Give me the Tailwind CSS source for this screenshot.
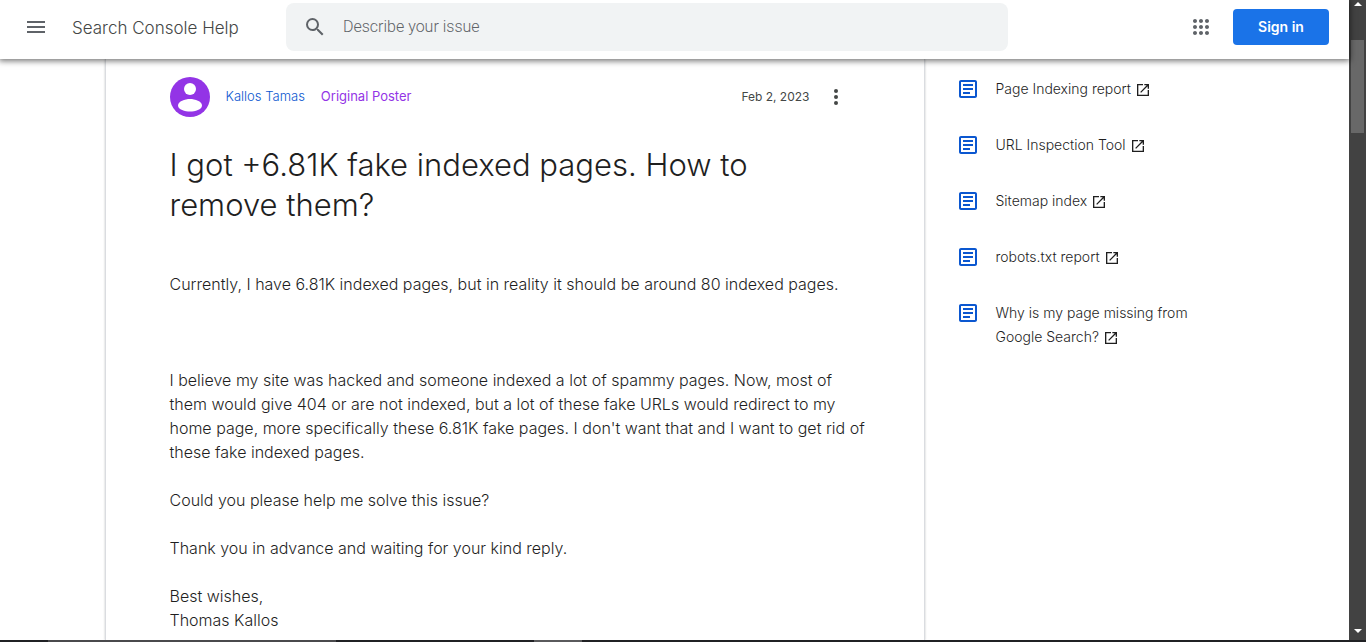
<!DOCTYPE html>
<html lang="en">
<head>
  <meta charset="UTF-8" />
  <meta name="viewport" content="width=device-width,initial-scale=1" />
  <title>I got +6.81K fake indexed pages. How to remove them? - Search Console Help</title>
  <script src="https://cdn.jsdelivr.net/npm/@tailwindcss/browser@4"></script>
</head>
<body class="h-screen flex flex-col overflow-hidden bg-white font-[Inter,sans-serif] text-[#1f1f1f]">

  <!-- icons shared by the resource links -->
  <svg class="hidden">
    <symbol id="article" viewBox="0 0 24 24">
      <path d="M19 5v14H5V5h14m0-2H5c-1.1 0-2 .9-2 2v14c0 1.1.9 2 2 2h14c1.1 0 2-.9 2-2V5c0-1.1-.9-2-2-2zM14 17H7v-2h7v2zm3-4H7v-2h10v2zm0-4H7V7h10v2z"/>
    </symbol>
    <symbol id="open-in-new" viewBox="0 0 24 24">
      <path d="M19 19H5V5h7V3H3v18h18v-9h-2v7zM14 3v2h3.590l-9.830 9.830 1.410 1.410L19 6.410V10h2V3h-7z"/>
    </symbol>
  </svg>

  <div class="flex-1 min-h-0 flex">
    <div class="flex-1 min-w-0 flex flex-col">

      <!-- Top bar -->
      <header class="relative z-10 h-[59px] shrink-0 flex items-start bg-white pl-6 pr-5 shadow-[0_1px_6px_1px_rgba(0,0,0,0.55)]">
        <button aria-label="Main menu" class="mt-[15px] size-6 text-[#5f6368]">
          <svg viewBox="0 0 24 24" class="size-6" fill="currentColor"><path d="M3 18h18v-2H3v2zm0-5h18v-2H3v2zm0-7v2h18V6H3z"/></svg>
        </button>
        <a href="#" class="mt-4 ml-6 w-[214px] text-[17px] leading-6 font-light text-[#444746]">Search Console Help</a>
        <label class="mt-[3px] flex-1 max-w-[722px] h-12 flex items-center gap-4 rounded-lg bg-[#f1f3f4] pl-[17px] pr-4">
          <svg viewBox="0 0 24 24" class="size-6 text-[#5f6368]" fill="currentColor"><path d="M15.500 14h-.790l-.280-.270A6.471 6.471 0 0 0 16 9.500 6.500 6.500 0 1 0 9.500 16c1.610 0 3.090-.590 4.230-1.570l.270.280v.790l5 4.990L20.490 19l-4.990-5zm-6 0C7.010 14 5 11.990 5 9.500S7.010 5 9.500 5 14 7.010 14 9.500 11.990 14 9.500 14z"/></svg>
          <input type="text" aria-label="Search help" placeholder="Describe your issue" class="flex-1 min-w-0 bg-transparent outline-none font-[Roboto,sans-serif] font-light text-base placeholder:text-[#5f6368]" />
        </label>
        <button aria-label="Google apps" class="mt-[15px] ml-auto size-6 text-[#5f6368]">
          <svg viewBox="0 0 24 24" class="size-6" fill="currentColor"><path d="M6 8c1.100 0 2-.900 2-2s-.900-2-2-2-2 .900-2 2 .900 2 2 2zm6 12c1.100 0 2-.900 2-2s-.900-2-2-2-2 .900-2 2 .900 2 2 2zm-6 0c1.100 0 2-.900 2-2s-.900-2-2-2-2 .900-2 2 .900 2 2 2zm0-6c1.100 0 2-.900 2-2s-.900-2-2-2-2 .900-2 2 .900 2 2 2zm6 0c1.100 0 2-.900 2-2s-.900-2-2-2-2 .900-2 2 .900 2 2 2zm4-8c0 1.100.900 2 2 2s2-.900 2-2-.900-2-2-2-2 .900-2 2zm-4 2c1.100 0 2-.900 2-2s-.900-2-2-2-2 .900-2 2 .900 2 2 2zm6 6c1.100 0 2-.900 2-2s-.900-2-2-2-2 .900-2 2 .900 2 2 2zm0 6c1.100 0 2-.900 2-2s-.900-2-2-2-2 .900-2 2 .900 2 2 2z"/></svg>
        </button>
        <button class="mt-[9px] ml-5 w-24 h-9 rounded bg-[#1a73e8] text-white font-semibold text-sm">Sign in</button>
      </header>

      <div class="flex-1 min-h-0 w-full max-w-[1140px] mx-auto flex">
        <!-- Thread -->
        <main class="flex-1 min-w-0 border-x border-[#dadce0] shadow-[0_0_2px_rgba(60,64,67,0.3)] pt-[18px] px-16">
          <div class="h-10 flex items-center text-[13px]">
            <svg viewBox="0 0 40 40" class="size-10 mr-4">
              <circle cx="20" cy="20" r="20" fill="#9334e6"/>
              <circle cx="20" cy="12" r="6" fill="#fff"/>
              <path d="M20 22c-5 0-12 2.200-12 6.500S15 34.500 20 34.500s12-1.700 12-6S25 22 20 22z" fill="#fff"/>
            </svg>
            <a href="#" class="font-light text-[#0b57d0]">Kallos Tamas</a>
            <span class="ml-4 text-[#9334e6]">Original Poster</span>
            <time datetime="2023-02-02" class="ml-auto text-xs text-[#444746]">Feb 2, 2023</time>
            <button aria-label="More options" class="ml-[14px] mr-3 size-6 text-[#444746]">
              <svg viewBox="0 0 24 24" class="size-6" fill="currentColor"><circle cx="12" cy="6" r="2"/><circle cx="12" cy="12" r="2"/><circle cx="12" cy="18" r="2"/></svg>
            </button>
          </div>

          <h1 class="mt-7 text-[31px] leading-10 font-light">I got +6.81K fake indexed pages. How to<br />remove them?</h1>

          <div class="mt-[47px] text-base leading-6 font-light whitespace-nowrap">
            <p>Currently, I have 6.81K indexed pages, but in reality it should be around 80 indexed pages.</p>
            <p class="mt-18">I believe my site was hacked and someone indexed a lot of spammy pages. Now, most of<br />them would give 404 or are not indexed, but a lot of these fake URLs would redirect to my<br />home page, more specifically these 6.81K fake pages. I don't want that and I want to get rid of<br />these fake indexed pages.</p>
            <p class="mt-6">Could you please help me solve this issue?</p>
            <p class="mt-6">Thank you in advance and waiting for your kind reply.</p>
            <p class="mt-6">Best wishes,<br />Thomas Kallos</p>
          </div>
        </main>

        <!-- Resources -->
        <aside class="w-80 shrink-0 pt-[18px] pl-[31px]">
          <ul class="space-y-8 text-sm leading-6 font-light">
            <li>
              <a href="#" class="flex gap-4"><svg class="size-6 shrink-0" fill="#0b57d0"><use href="#article"/></svg><span>Page Indexing report <svg class="inline size-4" fill="currentColor"><use href="#open-in-new"/></svg></span></a>
            </li>
            <li>
              <a href="#" class="flex gap-4"><svg class="size-6 shrink-0" fill="#0b57d0"><use href="#article"/></svg><span>URL Inspection Tool <svg class="inline size-4" fill="currentColor"><use href="#open-in-new"/></svg></span></a>
            </li>
            <li>
              <a href="#" class="flex gap-4"><svg class="size-6 shrink-0" fill="#0b57d0"><use href="#article"/></svg><span>Sitemap index <svg class="inline size-4" fill="currentColor"><use href="#open-in-new"/></svg></span></a>
            </li>
            <li>
              <a href="#" class="flex gap-4"><svg class="size-6 shrink-0" fill="#0b57d0"><use href="#article"/></svg><span>robots.txt report <svg class="inline size-4" fill="currentColor"><use href="#open-in-new"/></svg></span></a>
            </li>
            <li>
              <a href="#" class="flex gap-4"><svg class="size-6 shrink-0" fill="#0b57d0"><use href="#article"/></svg><span>Why is my page missing from<br />Google Search? <svg class="inline size-4" fill="currentColor"><use href="#open-in-new"/></svg></span></a>
            </li>
          </ul>
        </aside>
      </div>
    </div>

    <!-- Scrollbar -->
    <div class="w-[17px] shrink-0 flex flex-col items-center bg-[#424242]">
      <svg viewBox="0 0 8 4" class="mt-0.5 w-2 h-1" fill="#fff"><path d="M4 0l4 4H0z"/></svg>
      <div class="mt-[34px] w-[13px] h-[93px] bg-[#686868]"></div>
      <svg viewBox="0 0 8 4" class="mt-auto mb-[7px] w-2 h-1" fill="#fff"><path d="M0 0h8L4 4z"/></svg>
    </div>
  </div>

  <!-- Taskbar edge -->
  <div class="h-0.5 shrink-0 flex bg-[#202124]">
    <div class="ml-12 w-72 bg-[#4a4a4c]"></div>
    <div class="ml-[198px] w-12 bg-[#5a5a5c]"></div>
  </div>

</body>
</html>
